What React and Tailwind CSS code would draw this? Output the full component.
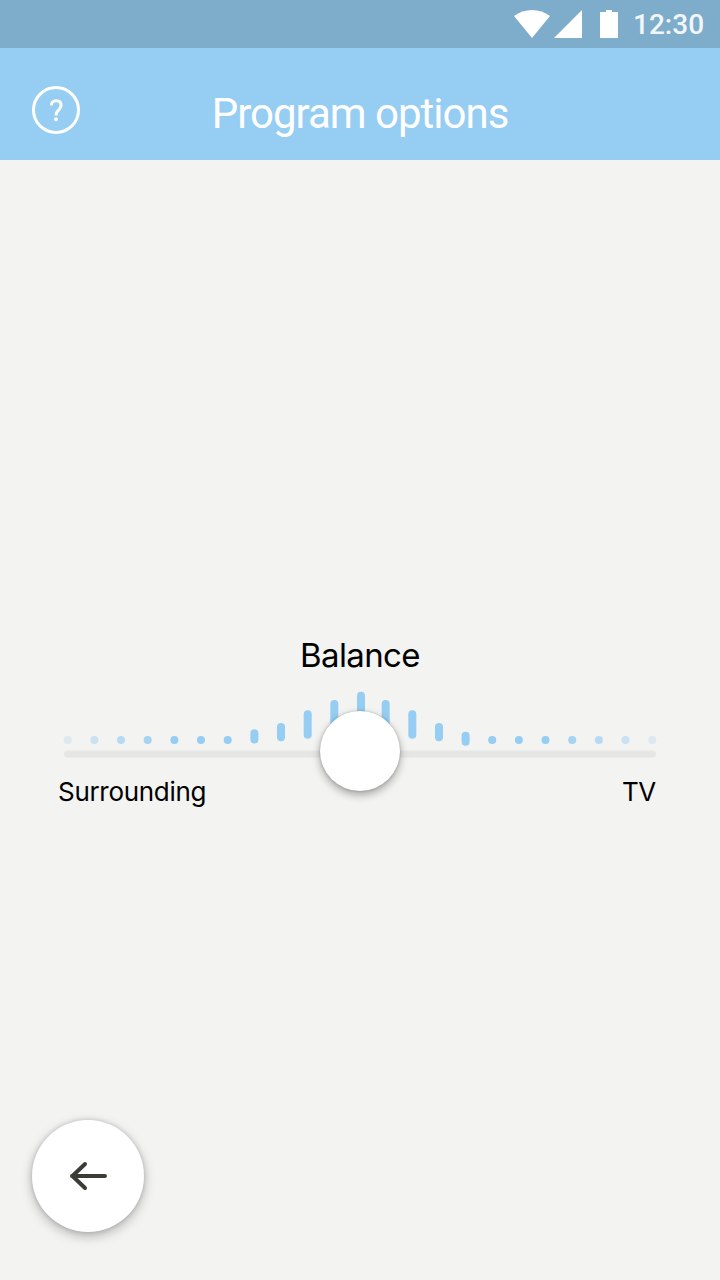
import React, { useState } from 'react';

// x = center of the bar, y = top edge, h = height
const BARS = [
  { x: 67.7, y: 736, h: 8, opacity: 0.25 },
  { x: 94.4, y: 736, h: 8, opacity: 0.45 },
  { x: 121, y: 736, h: 8, opacity: 0.65 },
  { x: 147.7, y: 736, h: 8, opacity: 0.85 },
  { x: 174.4, y: 736, h: 8, opacity: 1 },
  { x: 201, y: 736, h: 8, opacity: 1 },
  { x: 227.7, y: 736, h: 8, opacity: 1 },
  { x: 254.4, y: 729.3, h: 14.3, opacity: 1 },
  { x: 281, y: 723, h: 18.3, opacity: 1 },
  { x: 307.7, y: 710.3, h: 28.4, opacity: 1 },
  { x: 334.3, y: 700, h: 34, opacity: 1 },
  { x: 361, y: 691.7, h: 40, opacity: 1 },
  { x: 385.7, y: 700, h: 34, opacity: 1 },
  { x: 412.3, y: 710.3, h: 28.4, opacity: 1 },
  { x: 439, y: 723, h: 18.3, opacity: 1 },
  { x: 465.6, y: 731.7, h: 14, opacity: 1 },
  { x: 492.2, y: 736, h: 8, opacity: 1 },
  { x: 518.9, y: 736, h: 8, opacity: 1 },
  { x: 545.5, y: 736, h: 8, opacity: 1 },
  { x: 572.2, y: 736, h: 8, opacity: 0.85 },
  { x: 598.9, y: 736, h: 8, opacity: 0.65 },
  { x: 625.5, y: 736, h: 8, opacity: 0.45 },
  { x: 652.2, y: 736, h: 8, opacity: 0.25 },
];

function StatusBar() {
  return (
    <div className="h-12 bg-[#7dadcb] flex items-center justify-end text-white">
      <svg width="106" height="28" viewBox="0 0 106 28" fill="currentColor" className="mr-[13px]">
        <path d="M0 6C10.500 -2 25.500 -2 36 6L18 28Z" />
        <path d="M40 28L68 0V28Z" />
        <path d="M86 2H92V0H98V2H104V28H86Z" />
      </svg>
      <span className="w-[87px] pt-0.5 font-['Roboto',sans-serif] text-[28px] font-medium leading-none opacity-90">12:30</span>
    </div>
  );
}

function Header() {
  return (
    <header className="relative h-28 bg-[#96cdf2] text-white flex justify-center">
      <button aria-label="Help" className="absolute left-8 top-[38px] h-12 w-12">
        <svg width="48" height="48" viewBox="0 0 48 48" fill="none" stroke="currentColor" strokeWidth="3">
          <circle cx="24" cy="24" r="22.500" />
          <path d="M19.300 19.600C19.300 16.500 21.200 14.700 24.200 14.700C27.300 14.700 29.100 16.400 29.100 19.200C29.100 21.300 28.200 22.400 26.700 23.800C25 25.300 24.100 26.500 24.100 29.500" />
          <circle cx="24" cy="33.300" r="2" fill="currentColor" stroke="none" />
        </svg>
      </button>
      <h1 className="mt-[41px] font-['Roboto',sans-serif] text-[42px] leading-[49px] tracking-[-1px] whitespace-nowrap">
        Program options
      </h1>
    </header>
  );
}

function BalanceSlider() {
  const [balance, setBalance] = useState(50);

  return (
    <section className="mt-[475px] flex flex-col">
      <h2 className="text-center text-[33px] leading-[41px] tracking-[-0.6px]">Balance</h2>

      <div className="relative mt-[15px] h-[72px]">
        <svg width="720" height="72" viewBox="0 691 720 72" fill="#96cdf2" className="block">
          {BARS.map(bar => (
            <rect key={bar.x} x={bar.x - 4} y={bar.y} width="8" height={bar.h} rx="4" opacity={bar.opacity} />
          ))}
          <rect x="64" y="750.500" width="592" height="7" rx="3.500" fill="#e6e6e4" />
        </svg>
        {/* Knob */}
        <div
          className="absolute top-5 h-20 w-20 -translate-x-1/2 rounded-full bg-white shadow-[0_4px_8px_rgba(0,0,0,0.32),0_0_3px_rgba(0,0,0,0.22)]"
          style={{ left: `${balance}%` }}
        />
        <input
          type="range"
          aria-label="Balance"
          value={balance}
          onChange={e => setBalance(Number(e.target.value))}
          className="absolute inset-x-16 top-5 h-20 opacity-0"
        />
      </div>

      <div className="mt-[13px] flex justify-between pl-[58px] pr-16 text-[26px] leading-8 tracking-[-0.3px]">
        <span>Surrounding</span>
        <span>TV</span>
      </div>
    </section>
  );
}

export default function App() {
  return (
    <div className="flex h-[1280px] w-[720px] flex-col overflow-hidden bg-[#f3f3f1] font-['Inter',sans-serif] text-black">
      <StatusBar />
      <Header />
      <BalanceSlider />
      <button
        aria-label="Back"
        className="mt-auto mb-12 ml-8 flex h-28 w-28 items-center justify-center rounded-full bg-white text-[#3c3c37] shadow-[0_4px_12px_rgba(0,0,0,0.26),0_0_5px_rgba(0,0,0,0.16)]"
      >
        <svg width="40" height="32" viewBox="0 0 40 32" fill="none" stroke="currentColor" strokeWidth="4" strokeLinecap="round" strokeLinejoin="round">
          <path d="M37 16H4M17 4L4.500 16L17 28" />
        </svg>
      </button>
    </div>
  );
}
